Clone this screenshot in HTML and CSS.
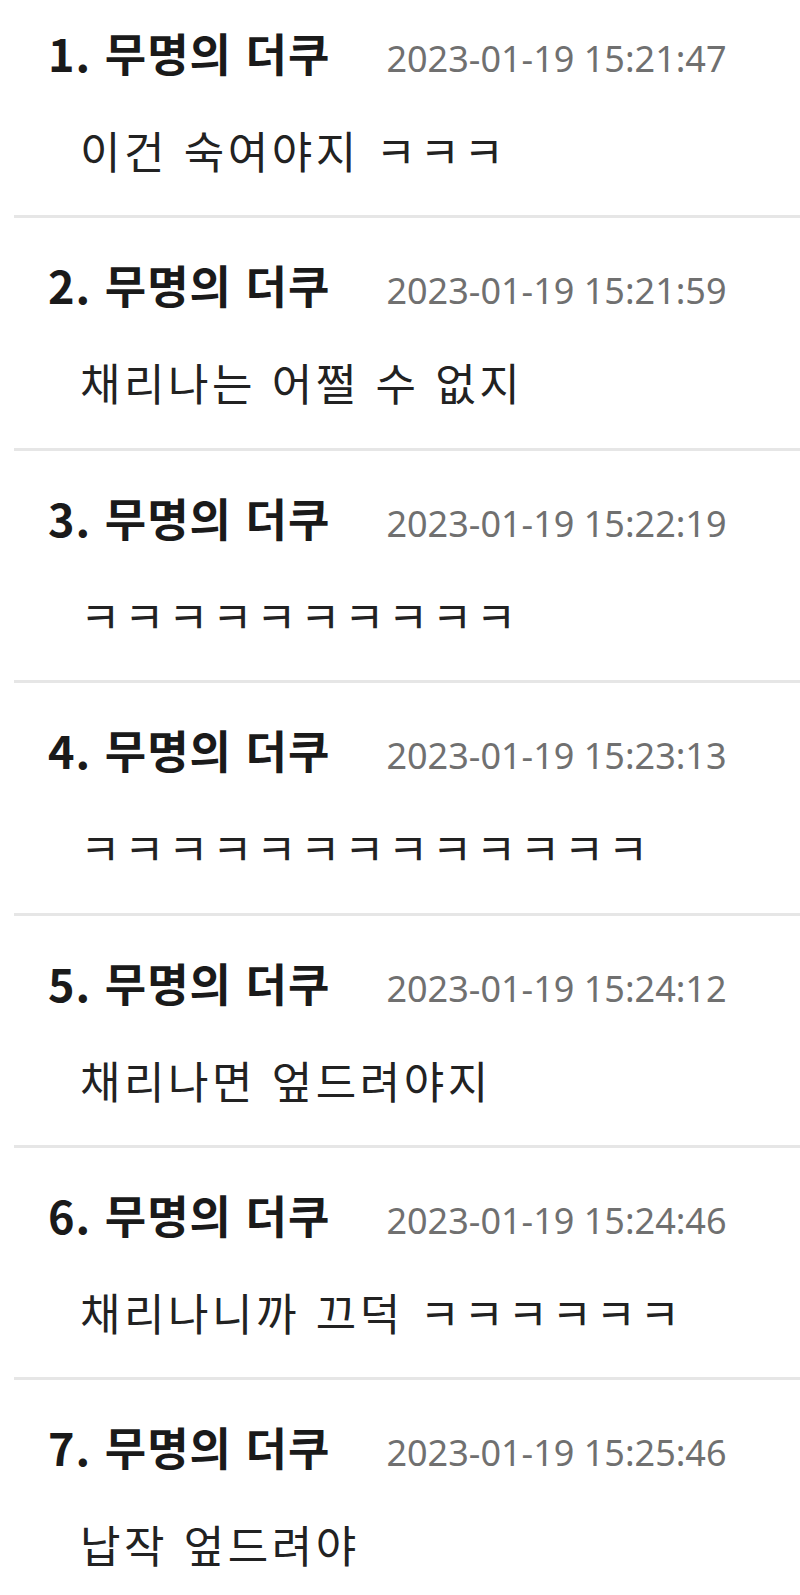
FILE: index.html
```html
<!DOCTYPE html>
<html lang="ko">
<head>
    <meta charset="UTF-8">
    <meta name="viewport" content="width=device-width, initial-scale=1.0">
    <title>댓글</title>
    <link rel="stylesheet" href="styles.css">
</head>
<body>
    <ul class="comments">
        <li class="comment">
            <div class="head"><span class="name">1. 무명의 더쿠</span><span class="date">2023-01-19 15:21:47</span></div>
            <p class="text">이건 숙여야지 ㅋㅋㅋ</p>
        </li>
        <li class="comment">
            <div class="head"><span class="name">2. 무명의 더쿠</span><span class="date">2023-01-19 15:21:59</span></div>
            <p class="text">채리나는 어쩔 수 없지</p>
        </li>
        <li class="comment">
            <div class="head"><span class="name">3. 무명의 더쿠</span><span class="date">2023-01-19 15:22:19</span></div>
            <p class="text">ㅋㅋㅋㅋㅋㅋㅋㅋㅋㅋ</p>
        </li>
        <li class="comment">
            <div class="head"><span class="name">4. 무명의 더쿠</span><span class="date">2023-01-19 15:23:13</span></div>
            <p class="text">ㅋㅋㅋㅋㅋㅋㅋㅋㅋㅋㅋㅋㅋ</p>
        </li>
        <li class="comment">
            <div class="head"><span class="name">5. 무명의 더쿠</span><span class="date">2023-01-19 15:24:12</span></div>
            <p class="text">채리나면 엎드려야지</p>
        </li>
        <li class="comment">
            <div class="head"><span class="name">6. 무명의 더쿠</span><span class="date">2023-01-19 15:24:46</span></div>
            <p class="text">채리나니까 끄덕 ㅋㅋㅋㅋㅋㅋ</p>
        </li>
        <li class="comment">
            <div class="head"><span class="name">7. 무명의 더쿠</span><span class="date">2023-01-19 15:25:46</span></div>
            <p class="text">납작 엎드려야</p>
        </li>
    </ul>
</body>
</html>
```

FILE: styles.css
```css
*{
    margin:0;
    padding:0;
    box-sizing: border-box;
}
body{
    background-color: #fff;
    font-family: "Noto Sans CJK KR", "Noto Sans", sans-serif;
    overflow: hidden;
}
.comments{
    list-style: none;
    margin-top: -14px;
    margin-left: 14px;
}
.comment{
    height: 232.4px;
    padding-top: 38px;
    border-bottom: 3px solid #e6e6e6;
}
.head{
    height: 58px;
    padding-left: 34px;
    font-size: 44px;
    line-height: 58px;
    white-space: nowrap;
}
.name{
    font-size: 45px;
    font-weight: bold;
    color: #1a1a1a;
    letter-spacing: 1px;
}
.date{
    margin-left: 56px;
    font-family: "Noto Sans", sans-serif;
    font-size: 36px;
    line-height: 1;
    color: #707070;
}
.text{
    margin-top: 39px;
    height: 58px;
    padding-left: 66px;
    font-size: 44px;
    line-height: 58px;
    letter-spacing: 3.5px;
    color: #222;
    white-space: nowrap;
}
```
